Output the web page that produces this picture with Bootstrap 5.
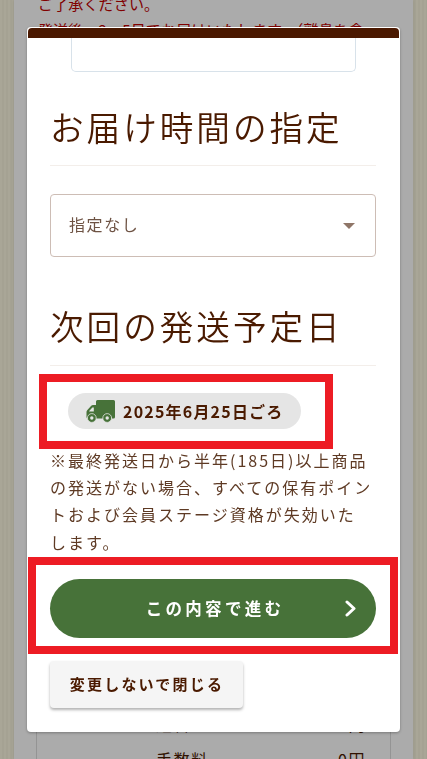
<!DOCTYPE html>
<html lang="ja">
<head>
<meta charset="utf-8">
<meta name="viewport" content="width=device-width, initial-scale=1">
<link href="https://cdn.jsdelivr.net/npm/bootstrap@5.3.0/dist/css/bootstrap.min.css" rel="stylesheet">
<style>
html,body{height:100%;overflow:hidden}
body{font-family:"Noto Sans CJK JP",sans-serif;color:#4a1a00;background:repeating-linear-gradient(90deg,#fcf8e2 0 2px,#f6f2dc 2px 4px);}
.page-col{height:759px;margin:0 14px;background:#fff;padding:0 23px 0 24px;overflow:hidden;box-shadow:0 0 3px rgba(0,0,0,.15)}
.page-note{margin-top:-9px;color:#c00000;font-size:15px;line-height:26px;white-space:nowrap;overflow:hidden;letter-spacing:.01em}
.page-note p{margin:0}
.fee-box{margin:667px -1px 0 -2px;border:1px solid #ddd;padding:0 24px 0 119px;height:120px;font-size:16px;letter-spacing:.1em}
.fee-row{display:flex;justify-content:space-between;line-height:26px;margin-bottom:9px}
.shade{position:fixed;inset:0;background:rgba(0,0,0,.33)}
.sheet{position:fixed;left:27px;top:27px;width:373px;height:705px;background:#fff;border-radius:4px;box-shadow:0 1px 3px rgba(0,0,0,.3);overflow:hidden;display:flex;flex-direction:column;padding:1px}
.sheet-top{height:10px;flex:none;background:#4a1800;border-radius:4px 4px 0 0}
.sheet-body{flex:1;padding:0 23px 0 22px;overflow:hidden;display:flex;flex-direction:column}
.stub-box{height:34px;margin:0 20px 0 21px;border:1px solid #d8e2ea;border-top:0;border-radius:0 0 5px 5px;flex:none}
.sec-title{font-size:33.6px;font-weight:350;letter-spacing:3px;line-height:46px;margin:0;color:#4a1a00;white-space:nowrap}
.title-a{margin-top:32px}
.title-b{margin-top:46px}
.sec-rule{height:1px;background:#f3eeea;flex:none;margin-top:16px}
.title-a + .sec-rule{margin-top:15px}
.pick{height:63px;border:1px solid #cdbdb5;border-radius:4px;padding:0 21px 4px 18px;font-size:16px;letter-spacing:.1em;color:#6e5344;box-shadow:none;background-color:#fff;margin-top:28px;background-image:url("data:image/svg+xml,%3Csvg xmlns='http://www.w3.org/2000/svg' viewBox='0 0 12 6'%3E%3Cpath d='M0 0h12L6 6z' fill='%238f7668'/%3E%3C/svg%3E");background-size:12px 6px;background-position:right 20px center}
.mark-box{border:8px solid #ed1c24;background:#fff}
.mark-date{width:294px;margin:8px 0 0 -11px;padding:11px 24px 12px 21px}
.date-pill{height:36px;background:#e5e5e5;border-radius:18px;padding:0 18px;font-size:16px;font-weight:700;letter-spacing:1.2px;color:#4a1a00;white-space:nowrap}
.date-pill svg{width:29px;height:23px;flex:none}
.note-text{font-size:16px;line-height:27.2px;letter-spacing:2px;margin:-2px 0 1px;color:#5e3a24;white-space:nowrap}
.mark-go{margin:0 -22px;padding:14px 14px 7px;height:97px;flex:none}
.go-btn{height:59px;width:100%;background:#477239;color:#fff;border:0;border-radius:30px;font-size:16.5px;font-weight:700;letter-spacing:.2em;position:relative;padding-left:16px}
.go-btn:hover,.go-btn:active{background:#477239!important;color:#fff!important}
.go-btn svg{position:absolute;right:19px;top:21px;width:13px;height:17px}
.close-btn{width:193px;height:47px;background:#f5f5f5;color:#4a1a00;border:0;border-radius:4px;font-size:15px;font-weight:700;letter-spacing:2.2px;box-shadow:0 2px 3px rgba(0,0,0,.3);margin-top:7px;padding:0 0 0 1px;white-space:nowrap}
</style>
</head>
<body>
<div class="page-col">
  <div class="page-note">
    <p>ご了承ください。</p>
    <p>発送後、2～5日でお届けいたします。（離島を含</p>
  </div>
  <div class="fee-box">
    <div class="fee-row"><span>送料</span><span>0円</span></div>
    <div class="fee-row"><span>手数料</span><span>0円</span></div>
  </div>
</div>
<div class="shade"></div>
<div class="sheet">
  <div class="sheet-top"></div>
  <div class="sheet-body">
    <div class="stub-box"></div>
    <h2 class="sec-title title-a">お届け時間の指定</h2>
    <div class="sec-rule"></div>
    <select class="form-select pick" aria-label="お届け時間"><option>指定なし</option></select>
    <h2 class="sec-title title-b">次回の発送予定日</h2>
    <div class="sec-rule"></div>
    <div class="mark-box mark-date">
      <div class="date-pill d-flex align-items-center gap-2">
        <svg viewBox="0 0 29 23" aria-hidden="true">
          <path fill="#477239" d="M10 1.500A1.500 1.500 0 0 1 11.500 0h16A1.500 1.500 0 0 1 29 1.500V17a1.500 1.500 0 0 1-1.500 1.500H2a1.500 1.500 0 0 1-1.500-1.500v-5c0-.8.300-1.500.9-2L5 6c.6-.7 1.300-1 2.100-1H10z"/>
          <path fill="#e5e5e5" d="M7.800 7.500H6.400L3.200 11v.5h4.600z"/>
          <circle cx="5.800" cy="18" r="4.400" fill="#477239" stroke="#e5e5e5" stroke-width=".8"/>
          <circle cx="5.800" cy="18" r="1.700" fill="#e5e5e5"/>
          <circle cx="21.200" cy="18" r="4.400" fill="#477239" stroke="#e5e5e5" stroke-width=".8"/>
          <circle cx="21.200" cy="18" r="1.700" fill="#e5e5e5"/>
        </svg>
        <span>2025年6月25日ごろ</span>
      </div>
    </div>
    <p class="note-text">※最終発送日から半年(185日)以上商品<br>の発送がない場合、すべての保有ポイン<br>トおよび会員ステージ資格が失効いた<br>します。</p>
    <div class="mark-box mark-go">
      <button type="button" class="btn go-btn">この内容で進む
        <svg viewBox="0 0 13 17" aria-hidden="true"><path d="M3 2l7 6.500L3 15" fill="none" stroke="#fff" stroke-width="3" stroke-linecap="round" stroke-linejoin="round"/></svg>
      </button>
    </div>
    <div><button type="button" class="btn close-btn">変更しないで閉じる</button></div>
  </div>
</div>
<script src="https://cdn.jsdelivr.net/npm/bootstrap@5.3.0/dist/js/bootstrap.bundle.min.js"></script>
</body>
</html>
